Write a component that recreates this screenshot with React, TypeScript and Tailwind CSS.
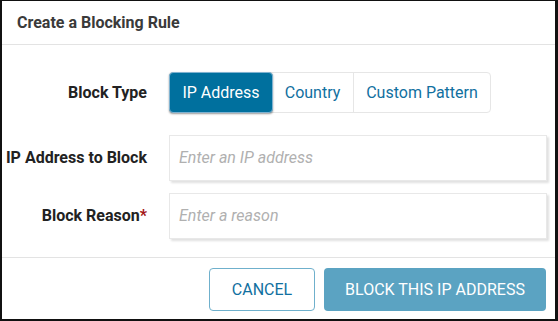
import React from "react";

export default function App() {
  const font = { fontFamily: "Roboto, 'Liberation Sans', sans-serif" };
  return (
    <div
      style={font}
      className="w-[558px] h-[321px] bg-white border-l-2 border-t-[1px] border-r-[3px] border-b-2 border-[#111] flex flex-col text-[#333]"
    >
      <div className="h-[44px] border-b border-[#e3e3e3] flex items-center pl-[15px] shrink-0">
        <span className="text-[16px] font-bold text-[#3a3a3a]">Create a Blocking Rule</span>
      </div>
      <div className="flex-1 flex flex-col pt-[27px]">
        <div className="flex items-center h-[41px]">
          <div className="w-[145px] text-right text-[16px] font-bold text-[#222]">Block Type</div>
          <div className="ml-[22px] flex h-[41px] rounded-[4px] border border-[#e6e6e6]">
            <div className="w-[104px] flex items-center justify-center bg-[#00709e] text-white text-[16px] rounded-[4px] border border-[#7fb2d0] shadow-[0_1px_2px_rgba(0,0,0,0.4)] -m-[1px]">
              IP Address
            </div>
            <div className="w-[82px] flex items-center justify-center text-[#1170a0] text-[16px] border-r border-[#e6e6e6]">
              Country
            </div>
            <div className="w-[136px] flex items-center justify-center text-[#1170a0] text-[16px]">
              Custom Pattern
            </div>
          </div>
        </div>
        <div className="flex items-center mt-[22px]">
          <div className="w-[145px] text-right text-[16px] font-bold text-[#222]">IP Address to Block</div>
          <div className="ml-[22px] w-[378px] h-[46px] border border-[#e8e8e8] shadow-[2px_2px_2px_rgba(0,0,0,0.12)] flex items-center pl-[9px]">
            <span className="text-[16px] italic text-[#b0b0b0]">Enter an IP address</span>
          </div>
        </div>
        <div className="flex items-center mt-[12px]">
          <div className="w-[145px] text-right text-[16px] font-bold text-[#222]">
            Block Reason<span className="text-[#a31515]">*</span>
          </div>
          <div className="ml-[22px] w-[378px] h-[46px] border border-[#e8e8e8] shadow-[2px_2px_2px_rgba(0,0,0,0.12)] flex items-center pl-[9px]">
            <span className="text-[16px] italic text-[#b0b0b0]">Enter a reason</span>
          </div>
        </div>
      </div>
      <div className="h-[62px] border-t border-[#e3e3e3] flex items-start justify-end pt-[10px] pr-[9px] gap-[9px] shrink-0">
        <div className="w-[106px] h-[43px] rounded-[4px] border border-[#6fb0cc] flex items-center justify-center text-[#1170a0] text-[16px]">
          CANCEL
        </div>
        <div className="w-[222px] h-[43px] rounded-[4px] bg-[#5ba3c2] flex items-center justify-center text-white text-[16px]">
          BLOCK THIS IP ADDRESS
        </div>
      </div>
    </div>
  );
}
